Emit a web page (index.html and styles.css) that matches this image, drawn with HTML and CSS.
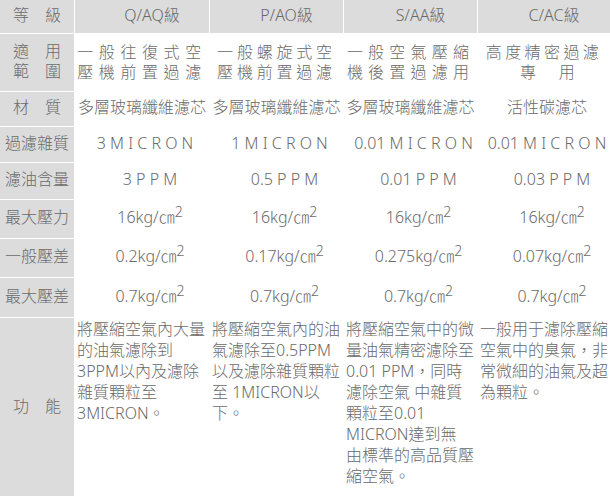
FILE: index.html
```html
<!DOCTYPE html>
<html lang="zh-Hant">
<head>
    <meta charset="UTF-8">
    <meta name="viewport" content="width=device-width, initial-scale=1.0">
    <title>濾芯等級規格</title>
    <link rel="stylesheet" href="styles.css">
</head>
<body>

<table class="spec">
    <colgroup>
        <col class="c-head">
        <col class="c-1">
        <col class="c-2">
        <col class="c-3">
        <col class="c-4">
    </colgroup>
    <tr class="r-grade">
        <th class="side">等　級</th>
        <th class="top">Q/AQ級</th>
        <th class="top">P/AO級</th>
        <th class="top">S/AA級</th>
        <th class="top">C/AC級</th>
    </tr>
    <tr class="r-use">
        <th class="side">適　用<br>範　圍</th>
        <td class="spread ls-1">一般往復式空<br>壓機前置過濾</td>
        <td class="spread ls-2">一般螺旋式空<br>壓機前置過濾</td>
        <td class="spread ls-3">一般空氣壓縮<br>機後置過濾用</td>
        <td class="spread ls-4">高度精密過濾<br><span class="nudge">專　用</span></td>
    </tr>
    <tr class="r-material">
        <th class="side">材　質</th>
        <td class="tight">多層玻璃纖維濾芯</td>
        <td class="tight">多層玻璃纖維濾芯</td>
        <td class="tight">多層玻璃纖維濾芯</td>
        <td class="tight shift">活性碳濾芯</td>
    </tr>
    <tr class="r-micron">
        <th class="side">過濾雜質</th>
        <td class="micron">3 M I C R O N</td>
        <td class="micron">1 M I C R O N</td>
        <td class="micron">0.01 M I C R O N</td>
        <td class="micron">0.01 M I C R O N</td>
    </tr>
    <tr class="r-oil">
        <th class="side">濾油含量</th>
        <td class="num">3 P P M</td>
        <td class="num">0.5 P P M</td>
        <td class="num">0.01 P P M</td>
        <td class="num">0.03 P P M</td>
    </tr>
    <tr class="r-press">
        <th class="side">最大壓力</th>
        <td class="num">16kg/㎝<sup>2</sup></td>
        <td class="num">16kg/㎝<sup>2</sup></td>
        <td class="num">16kg/㎝<sup>2</sup></td>
        <td class="num">16kg/㎝<sup>2</sup></td>
    </tr>
    <tr class="r-diff">
        <th class="side">一般壓差</th>
        <td class="num">0.2kg/㎝<sup>2</sup></td>
        <td class="num">0.17kg/㎝<sup>2</sup></td>
        <td class="num">0.275kg/㎝<sup>2</sup></td>
        <td class="num">0.07kg/㎝<sup>2</sup></td>
    </tr>
    <tr class="r-maxdiff">
        <th class="side">最大壓差</th>
        <td class="num">0.7kg/㎝<sup>2</sup></td>
        <td class="num">0.7kg/㎝<sup>2</sup></td>
        <td class="num">0.7kg/㎝<sup>2</sup></td>
        <td class="num">0.7kg/㎝<sup>2</sup></td>
    </tr>
    <tr class="r-func">
        <th class="side">功　能</th>
        <td class="func">將壓縮空氣內大量<br>的油氣濾除到<br>3PPM以內及濾除<br>雜質顆粒至<br>3MICRON。</td>
        <td class="func">將壓縮空氣內的油<br>氣濾除至0.5PPM<br>以及濾除雜質顆粒<br>至 1MICRON以<br>下。</td>
        <td class="func">將壓縮空氣中的微<br>量油氣精密濾除至<br>0.01 PPM，同時<br>濾除空氣 中雜質<br>顆粒至0.01<br>MICRON達到無<br>由標準的高品質壓<br>縮空氣。</td>
        <td class="func">一般用于濾除壓縮<br>空氣中的臭氣，非<br>常微細的油氣及超<br>為顆粒。</td>
    </tr>
</table>

</body>
</html>
```

FILE: styles.css
```css
body {
    margin: 0;
    background: #fff;
    font-family: "Noto Sans", "Noto Sans CJK TC", sans-serif;
    font-size: 16px;
    font-weight: 300;
    color: #6a6a6a;
    overflow: hidden;
}

.spec {
    table-layout: fixed;
    width: 612px;
    margin: -1px 0 0 -1px;
    border-collapse: separate;
    border-spacing: 1px;
    background: #fff;
}
.c-head { width: 74px; }
.c-1 { width: 134px; }
.c-2 { width: 133px; }
.c-3 { width: 133px; }
.c-4 { width: 132px; }

th, td {
    padding: 0 0 4px;
    font-weight: 300;
    text-align: center;
    vertical-align: middle;
    white-space: nowrap;
    line-height: 20px;
}
th.side,
th.top {
    background: #dcdcdc;
}
th.top {
    padding-left: 20px;
}

.r-grade { height: 33px; }
.r-use { height: 57px; }
.r-material { height: 34px; }
.r-micron { height: 35px; }
.r-oil { height: 36px; }
.r-press { height: 38px; }
.r-diff { height: 38px; }
.r-maxdiff { height: 39px; }
.r-func { height: 179px; }

/* 適用範圍 */
.spread { padding: 0 0 2px; }
.ls-1 { letter-spacing: 5.6px; }
.ls-2 { letter-spacing: 3.8px; }
.ls-3 { letter-spacing: 5.2px; }
.ls-4 { letter-spacing: 3.4px; }
.nudge { margin-left: 10px; }

.tight { padding: 0 0 4px; }
.shift { padding-left: 6px; }

.micron { padding-left: 6px; }
.num { padding-left: 16px; }

sup {
    font-size: 14px;
    line-height: 0;
    vertical-align: 6px;
}

.func {
    text-align: left;
    vertical-align: top;
    line-height: 21px;
    padding: 1px 0 0 2px;
}
```
